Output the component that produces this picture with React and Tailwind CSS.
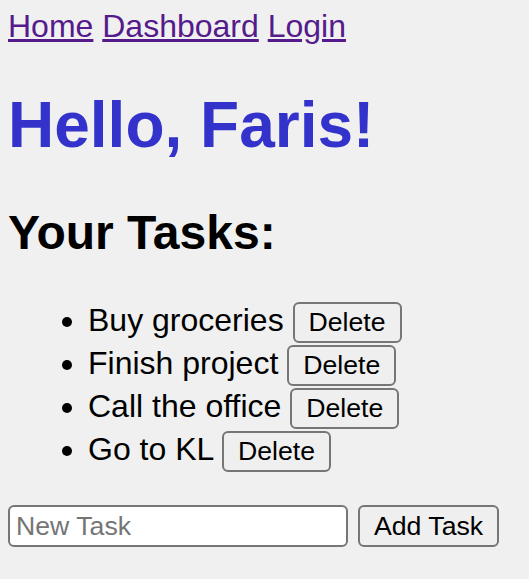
import React, { useState } from 'react'

export default function App() {
  const [tasks, setTasks] = useState(['Buy groceries', 'Finish project', 'Call the office', 'Go to KL'])
  const [text, setText] = useState('')

  const addTask = (e) => {
    e.preventDefault()
    if (!text.trim()) return
    setTasks([...tasks, text.trim()])
    setText('')
  }

  return (
    <div className="min-h-screen bg-[#f0f0f0] p-[8px] text-black" style={{ fontFamily: '"Liberation Sans", Arial, sans-serif' }}>
      <nav className="text-[32px] leading-[37px]">
        <a href="#" className="text-[#551a8b] underline">Home</a>{' '}
        <a href="#" className="text-[#551a8b] underline">Dashboard</a>{' '}
        <a href="#" className="text-[#551a8b] underline">Login</a>
      </nav>

      <h1 className="mt-[43px] text-[64px] leading-[74px] font-bold text-[#3333cc]">Hello, Faris!</h1>

      <h2 className="mt-[43px] text-[48px] leading-[55px] font-bold">Your Tasks:</h2>

      <ul className="mt-[42px] list-disc pl-[80px] text-[32px] leading-[37px]">
        {tasks.map((t, i) => (
          <li key={i} className="h-[43px]">
            {t}{' '}
            <button
              onClick={() => setTasks(tasks.filter((_, j) => j !== i))}
              className="inline-block h-[41px] rounded-[6px] border-2 border-[#767676] bg-[#efefef] px-[14px] text-[26.67px] leading-[33px] align-baseline"
            >
              Delete
            </button>
          </li>
        ))}
      </ul>

      <form onSubmit={addTask} className="mt-[31px] flex items-center gap-[10px]">
        <input
          value={text}
          onChange={(e) => setText(e.target.value)}
          placeholder="New Task"
          className="h-[42px] w-[340px] rounded-[6px] border-2 border-[#767676] bg-white px-[6px] text-[26.67px] placeholder:text-[#757575] outline-none"
        />
        <button
          type="submit"
          className="h-[42px] rounded-[6px] border-2 border-[#767676] bg-[#efefef] px-[14px] text-[26.67px] leading-[33px]"
        >
          Add Task
        </button>
      </form>
    </div>
  )
}
